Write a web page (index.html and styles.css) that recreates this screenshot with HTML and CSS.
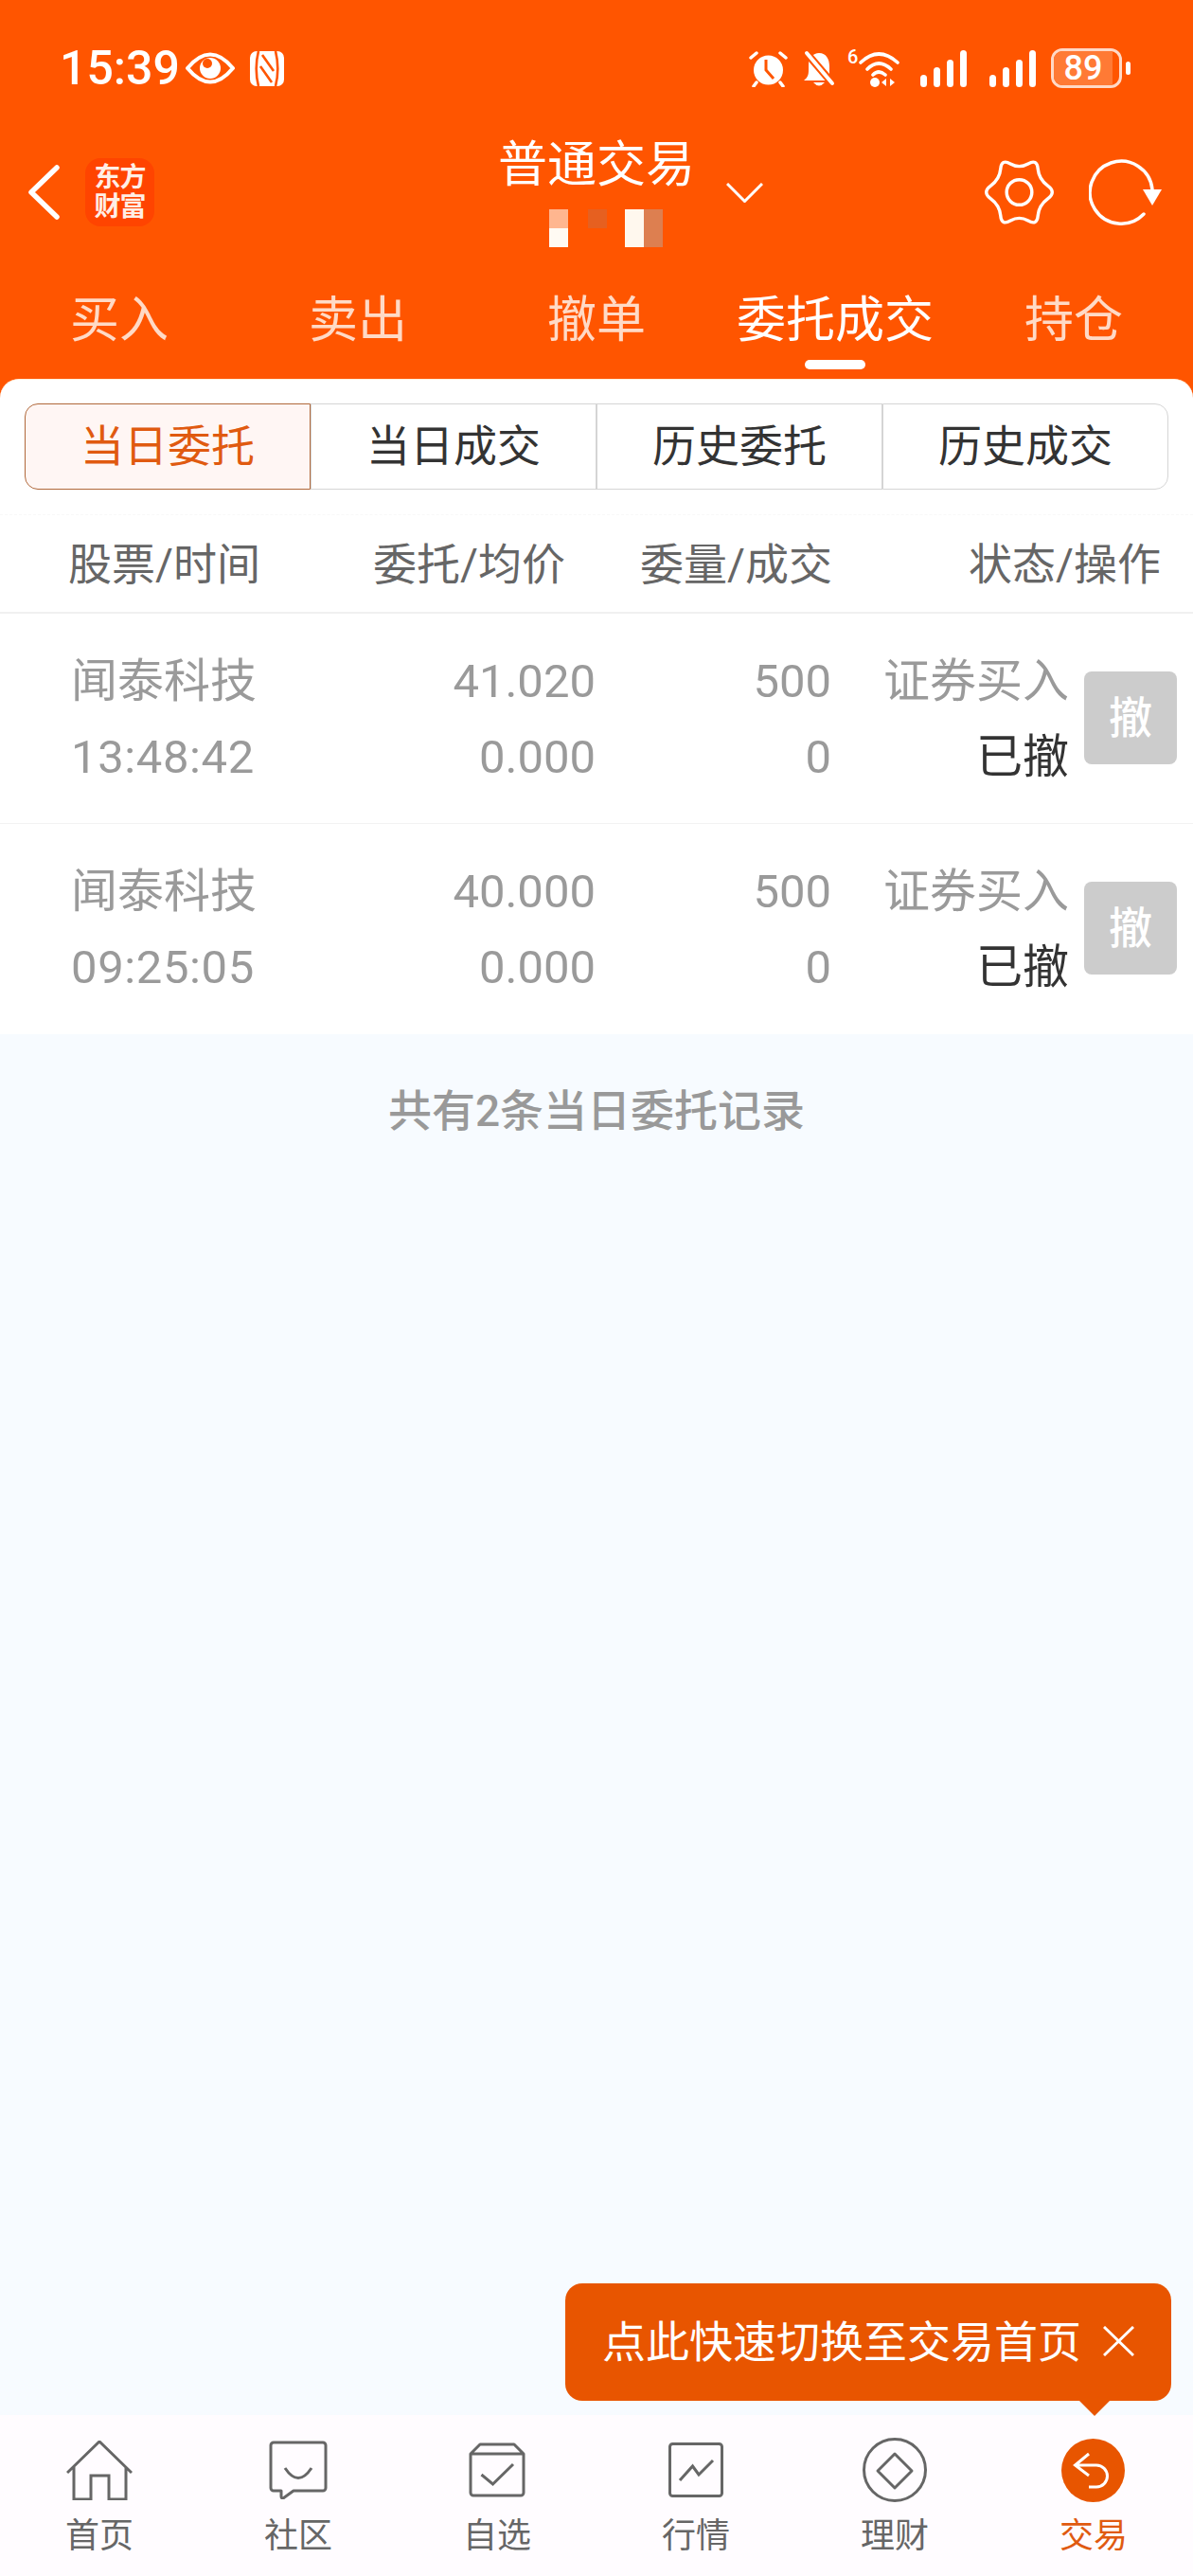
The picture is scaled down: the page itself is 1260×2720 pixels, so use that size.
FILE: index.html
```html
<!DOCTYPE html>
<html lang="zh-CN">
<head>
<meta charset="utf-8">
<title>普通交易</title>
<link rel="stylesheet" href="styles.css">
</head>
<body>
<div class="phone">
  <header class="top">
    <div class="status">
      <span class="clock">15:39</span>
      <svg class="ic-eye" width="52" height="34" viewBox="0 0 52 34"><path d="M2 17Q26-12 50 17Q26 46 2 17Z" fill="none" stroke="#fff" stroke-width="4" stroke-linejoin="round"/><circle cx="26" cy="17" r="11" fill="#fff"/><circle cx="23" cy="12" r="5" fill="#f50"/></svg>
      <svg class="ic-nfc" width="36" height="37" viewBox="0 0 36 37"><rect width="36" height="37" rx="7" fill="#fff"/><path d="M9 0C6 12 6 25 9 37M27 0C30 12 30 25 27 37M13 4L25 21M11 16L23 33" fill="none" stroke="#f50" stroke-width="2.6"/></svg>
      <div class="status-right">
        <svg width="41" height="39" viewBox="0 0 41 39"><circle cx="20.5" cy="21" r="15.5" fill="#fff"/><path d="M2 8L8 3M39 8L33 3M8 34L5 38M33 34L36 38" stroke="#fff" stroke-width="3.5" stroke-linecap="round"/><path d="M18 10V21L26 30" fill="none" stroke="#f50" stroke-width="3"/></svg>
        <svg class="ic-bell" width="34" height="39" viewBox="0 0 34 39"><path d="M17 3C25 3 28 10 28 17V26L33 32H1C5 29 6 26 6 21V15C6 8 11 3 17 3Z" fill="#fff"/><path d="M11 34Q17 41 23 34Z" fill="#fff"/><path d="M3 2L33 37" stroke="#f50" stroke-width="8"/><path d="M4 3L31 35" stroke="#fff" stroke-width="4" stroke-linecap="round"/></svg>
        <span class="six">6</span>
        <svg class="ic-wifi" width="44" height="40" viewBox="0 0 44 40"><path d="M2 14Q21-4 41 14M9 21Q21 9 34 21M15 27Q21 21 28 27" fill="none" stroke="#fff" stroke-width="3.6" stroke-linecap="round"/><circle cx="17" cy="35" r="5" fill="#fff"/><path d="M29 31V39L24 35ZM33 31V39L38 35Z" fill="#fff"/></svg>
        <svg class="ic-sig" width="49" height="39" viewBox="0 0 49 39"><rect y="26" width="7" height="13" rx="3.500" fill="#fff"/><rect x="14" y="18" width="7" height="21" rx="3.500" fill="#fff"/><rect x="28" y="10" width="7" height="29" rx="3.500" fill="#fff"/><rect x="42" width="7" height="39" rx="3.500" fill="#fff"/></svg>
        <svg class="ic-sig2" width="49" height="39" viewBox="0 0 49 39"><rect y="26" width="7" height="13" rx="3.500" fill="#fff"/><rect x="14" y="18" width="7" height="21" rx="3.500" fill="#fff"/><rect x="28" y="10" width="7" height="29" rx="3.500" fill="#fff"/><rect x="42" width="7" height="39" rx="3.500" fill="#fff"/></svg>
        <div class="battery"><span class="batt-fill"></span><span class="batt-num">89</span></div>
        <span class="batt-tip"></span>
      </div>
    </div>
    <div class="header">
      <div class="head-left">
        <svg class="ic-back" width="34" height="58" viewBox="0 0 34 58"><path d="M31 3L4 29L31 55" fill="none" stroke="#fff" stroke-width="5.5" stroke-linecap="round" stroke-linejoin="round"/></svg>
        <div class="logo">东方<br>财富</div>
      </div>
      <div class="head-center">
        <div class="title">普通交易</div>
        <div class="mask">
          <span class="mk mk-a"></span><span class="mk mk-b"></span><span class="mk mk-c"></span><span class="mk mk-d"></span>
        </div>
      </div>
      <div class="head-right">
        <svg class="ic-drop" width="39" height="21" viewBox="0 0 39 21"><path d="M1 1L19.500 19.500L38 1" fill="none" stroke="#fff" stroke-width="3"/></svg>
        <svg class="ic-gear" width="73" height="70" viewBox="-1 0 74 70"><path d="M45.500 4.500Q55-1 56 10Q57 21 66.500 28Q76 35 66.500 42Q57 49 56 60Q55 71 45.500 65.500Q36 60 26.500 65.500Q17 71 16 60Q15 49 5.500 42Q-4 35 5.500 28Q15 21 16 10Q17-1 26.500 4.500Q36 10 45.500 4.500Z" fill="none" stroke="#fff" stroke-width="3.500"/><circle cx="36" cy="35" r="13.500" fill="none" stroke="#fff" stroke-width="3.500"/></svg>
        <svg class="ic-refresh" width="77" height="70" viewBox="0 0 77 70"><path d="M58 58A33 33 0 1 1 67 32" fill="none" stroke="#fff" stroke-width="3.500" stroke-linecap="round"/><path d="M57 32H77L67 49Z" fill="#fff"/></svg>
      </div>
    </div>
    <nav class="tabs">
      <div class="tab"><span>买入</span></div>
      <div class="tab"><span>卖出</span></div>
      <div class="tab"><span>撤单</span></div>
      <div class="tab tab-on"><span>委托成交</span><i class="tab-bar"></i></div>
      <div class="tab"><span>持仓</span></div>
    </nav>
  </header>

  <main class="main">
    <section class="card">
      <div class="seg-wrap">
        <div class="seg">
          <div class="seg-item seg-on">当日委托</div>
          <div class="seg-item">当日成交</div>
          <div class="seg-item">历史委托</div>
          <div class="seg-item">历史成交</div>
        </div>
      </div>
      <div class="thead">
        <div class="th-name">股票/时间</div>
        <div class="r">委托/均价</div>
        <div class="r">委量/成交</div>
        <div class="r">状态/操作</div>
      </div>
      <div class="row">
        <div class="c1">闻泰科技</div>
        <div class="num">41.020</div>
        <div class="num">500</div>
        <div class="r">证券买入</div>
        <div class="btn">撤</div>
        <div class="c1 num-l">13:48:42</div>
        <div class="num">0.000</div>
        <div class="num">0</div>
        <div class="r done">已撤</div>
      </div>
      <div class="row row-end">
        <div class="c1">闻泰科技</div>
        <div class="num">40.000</div>
        <div class="num">500</div>
        <div class="r">证券买入</div>
        <div class="btn">撤</div>
        <div class="c1 num-l">09:25:05</div>
        <div class="num">0.000</div>
        <div class="num">0</div>
        <div class="r done">已撤</div>
      </div>
    </section>
    <p class="note">共有2条当日委托记录</p>
  </main>

  <nav class="nav">
    <div class="nav-item">
      <div class="nav-ic"><svg width="70" height="63" viewBox="0 0 70 63"><path d="M1 34L35 1L69 34M8 28V62H26V37H45V62H63V28" fill="none" stroke="#666" stroke-width="3"/></svg></div>
      <span>首页</span>
    </div>
    <div class="nav-item">
      <div class="nav-ic"><svg width="62" height="62" viewBox="0 0 62 62"><path d="M5 2H57A3 3 0 0 1 60 5V50A3 3 0 0 1 57 53H26L15 61Q13 61 13 59V53H5A3 3 0 0 1 2 50V5A3 3 0 0 1 5 2Z" fill="none" stroke="#666" stroke-width="3" stroke-linejoin="round"/><path d="M17 29Q31 50 45 29" fill="none" stroke="#666" stroke-width="3"/></svg></div>
      <span>社区</span>
    </div>
    <div class="nav-item">
      <div class="nav-ic"><svg width="60" height="58" viewBox="0 0 60 58"><path d="M12 2H48L58 12V53A3 3 0 0 1 55 56H5A3 3 0 0 1 2 53V12ZM2 12H58" fill="none" stroke="#666" stroke-width="3" stroke-linejoin="round"/><path d="M13.500 34L25.500 44L47 23" fill="none" stroke="#666" stroke-width="3"/></svg></div>
      <span>自选</span>
    </div>
    <div class="nav-item">
      <div class="nav-ic"><svg width="58" height="58" viewBox="0 0 58 58"><rect x="1.500" y="1.500" width="55" height="55" rx="3" fill="none" stroke="#666" stroke-width="3"/><path d="M12 40L25.500 25L32 34L47 19" fill="none" stroke="#666" stroke-width="3"/></svg></div>
      <span>行情</span>
    </div>
    <div class="nav-item">
      <div class="nav-ic"><svg width="68" height="68" viewBox="0 0 68 68"><circle cx="34" cy="34" r="32.500" fill="none" stroke="#666" stroke-width="3"/><path d="M34 17L52 35L34 53L16 35Z" fill="none" stroke="#666" stroke-width="3" stroke-linejoin="round"/></svg></div>
      <span>理财</span>
    </div>
    <div class="nav-item nav-on">
      <div class="nav-ic"><svg class="ic-trade" width="67" height="67" viewBox="0 0 67 67"><circle cx="33.500" cy="33.500" r="33.500" fill="#e85500"/><path d="M29 16L14.500 28L29 39M15 28H37A11.500 11.500 0 0 1 37 51H29" fill="none" stroke="#fff" stroke-width="3"/></svg></div>
      <span>交易</span>
    </div>
  </nav>

  <div class="tip">
    <span class="tip-text">点此快速切换至交易首页</span>
    <svg class="tip-x" width="33" height="32" viewBox="0 0 33 32"><path d="M1 1L32 31M32 1L1 31" stroke="#fff" stroke-width="3"/></svg>
    <i class="tip-arrow"></i>
  </div>
</div>
</body>
</html>
```

FILE: styles.css
```css
* { box-sizing: border-box; }
html, body { margin: 0; padding: 0; }
body { font-family: Roboto, "Noto Sans CJK SC", sans-serif; }

.phone {
  position: relative;
  width: 1260px;
  height: 2720px;
  display: flex;
  flex-direction: column;
  overflow: hidden;
  background: #f7fbff;
}

.top { background: #ff5500; color: #fff; height: 420px; flex: none; }

.status {
  height: 144px;
  display: flex;
  align-items: center;
  padding-left: 63px;
}
.clock { font-size: 50px; font-weight: 500; line-height: 60px; width: 133px; }
.ic-nfc { margin-left: 16px; }
.status-right {
  margin-left: auto;
  width: 469px;
  display: flex;
  align-items: center;
}
.ic-bell { margin-left: 16px; }
.six { font-size: 20px; line-height: 20px; width: 12px; margin: -24px 0 0 13px; font-weight: 500; }
.ic-sig { margin-left: 21px; }
.ic-sig2 { margin-left: 24px; }
.battery {
  position: relative;
  width: 75px;
  height: 42px;
  margin-left: 16px;
  border: 3px solid #ffd9c6;
  border-radius: 12px;
  overflow: hidden;
  display: flex;
  align-items: center;
  justify-content: center;
}
.batt-fill { position: absolute; left: 0; top: 0; bottom: 0; width: 62px; background: #ff7a35; }
.batt-num { position: relative; font-size: 36px; font-weight: 500; line-height: 36px; margin-right: 7px; }
.batt-tip { width: 5px; height: 14px; margin-left: 4px; background: #fff; border-radius: 3px; }

.header {
  height: 156px;
  padding-bottom: 38px;
  display: flex;
  align-items: center;
}
.head-left { width: 526px; padding-left: 29px; display: flex; align-items: center; }
.logo {
  width: 73px;
  height: 72px;
  margin-left: 27px;
  border-radius: 16px;
  background: #ff4400;
  color: #ffeee6;
  font-size: 28px;
  font-weight: 700;
  line-height: 31px;
  text-align: center;
  padding-top: 5px;
  letter-spacing: -1px;
}
.head-center { width: 204px; }
.title { font-size: 52px; line-height: 60px; white-space: nowrap; }
.mask { display: flex; height: 40px; margin: 16px 0 0 54px; }
.mk { display: block; width: 20px; }
.mk-a { height: 40px; background: linear-gradient(#ffb68f 50%, #fffaf3 50%); }
.mk-b { height: 20px; margin-left: 21px; background: #e66020; }
.mk-c { height: 40px; margin-left: 19px; background: #fff8ee; }
.mk-d { height: 40px; background: #dd7f50; }
.head-right { flex: 1; display: flex; align-items: center; }
.ic-drop { margin-left: 37px; }
.ic-gear { margin-left: 234px; }
.ic-refresh { margin-left: 37px; }

.tabs { display: flex; height: 120px; }
.tab {
  flex: 1;
  display: flex;
  flex-direction: column;
  align-items: center;
  font-size: 52px;
  line-height: 78px;
  color: #ffdac6;
}
.tab-on { color: #fff; }
.tab-bar { display: block; width: 64px; height: 10px; margin-top: 2px; border-radius: 5px; background: #fff; }

.main { flex: 1; margin-top: -20px; position: relative; }
.card {
  background: #fff;
  border-top: 1px solid #ffeeda;
  border-radius: 20px 20px 0 0;
}

.seg-wrap { padding: 25px 26px 26px; border-bottom: 1px dashed #f8f8f8; }
.seg { display: flex; height: 91px; }
.seg-item {
  flex: 1;
  border: 1px solid #d5d5d5;
  font-size: 46px;
  line-height: 88px;
  text-align: center;
  color: #333;
}
.seg-item:first-child { border-radius: 14px 0 0 14px; }
.seg-item:last-child { border-radius: 0 14px 14px 0; }
.seg-item.seg-on {
  border-color: #b0683a;
  background: #fff6f4;
  color: #e05a10;
}

.thead {
  display: grid;
  grid-template-columns: 260px 265px 282px 347px;
  height: 104px;
  padding-left: 72px;
  font-size: 46px;
  line-height: 105px;
  color: #666;
  border-bottom: 2px solid #f0f0f0;
}

.r { text-align: right; white-space: nowrap; }

.row {
  display: grid;
  grid-template-columns: 303px 251px 249px 251px 98px;
  grid-template-rows: 80px 80px;
  height: 222px;
  padding: 32px 0 0 75px;
  font-size: 49px;
  line-height: 80px;
  color: #9a9a9a;
  border-bottom: 1px solid #f2f2f2;
}
.row-end { border-bottom: none; }
.num { text-align: right; }
.num-l { letter-spacing: 0.6px; }
.done { color: #333; }
.btn {
  grid-row: 1 / span 2;
  grid-column: 5;
  align-self: center;
  width: 98px;
  height: 98px;
  margin: 0 0 4px 16px;
  border-radius: 8px;
  background: #cccccc;
  color: #fff;
  font-size: 46px;
  font-weight: 500;
  line-height: 98px;
  text-align: center;
}

.note {
  margin: 0;
  font-size: 46px;
  font-weight: 500;
  line-height: 162px;
  text-align: center;
  color: #999;
}

.nav {
  flex: none;
  height: 170px;
  padding-top: 23px;
  display: flex;
  background: #fffcff;
}
.nav-item {
  flex: 1;
  display: flex;
  flex-direction: column;
  align-items: center;
  font-size: 36px;
  line-height: 40px;
  color: #666;
}
.nav-item span { margin-top: 15px; }
.nav-ic { height: 70px; display: flex; align-items: center; }
.nav-on { color: #e05a10; }
.ic-trade { margin-left: -2px; }

.tip {
  position: absolute;
  left: 597px;
  top: 2411px;
  width: 640px;
  height: 124px;
  border-radius: 18px;
  background: #e85500;
  color: #fff;
  display: flex;
  align-items: center;
  padding: 0 0 0 39px;
}
.tip-text { font-size: 46px; line-height: 122px; white-space: nowrap; }
.tip-x { margin-left: 23px; margin-top: -2px; }
.tip-arrow {
  position: absolute;
  left: 543px;
  top: 124px;
  width: 0;
  height: 0;
  border-left: 16px solid transparent;
  border-right: 16px solid transparent;
  border-top: 16px solid #e85500;
}
```
